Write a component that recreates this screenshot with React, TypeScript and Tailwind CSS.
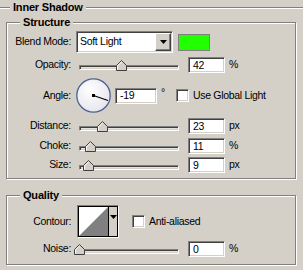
import React from 'react';

const face = 'bg-[#d4d0c8]';
const sunken =
  'border border-t-[#808080] border-l-[#808080] border-r-white border-b-white shadow-[inset_1px_1px_0_#404040,inset_-1px_-1px_0_#d4d0c8]';

function Thumb() {
  return (
    <svg width="11" height="11" viewBox="0 0 11 11">
      <path d="M0.5 10.5 V5.5 L5.5 0.5 L10.5 5.5 V10.5 Z" fill="#d4d0c8" stroke="#404040" />
      <path d="M1.5 9.5 V5.9 L5.5 1.9" fill="none" stroke="#ffffff" />
    </svg>
  );
}

function Slider({ value }: { value: number }) {
  return (
    <div className="relative w-[100px] h-[11px] flex items-end">
      <div className={`w-full h-[5px] mb-[1px] bg-[#e6e3dd] ${sunken}`} />
      <div className="absolute top-0" style={{ left: value - 5 }}>
        <Thumb />
      </div>
    </div>
  );
}

function Field({ value, w = 'w-[37px]' }: { value: string; w?: string }) {
  return (
    <div className={`${w} h-[16px] bg-white ${sunken} pl-[4px] flex items-center leading-none`}>
      {value}
    </div>
  );
}

function Check() {
  return <div className={`w-[13px] h-[13px] bg-white ${sunken}`} />;
}

function Label({ children }: { children: React.ReactNode }) {
  return <div className="w-[64px] text-right shrink-0">{children}</div>;
}

function SliderRow({
  label,
  value,
  unit,
  className = '',
}: {
  label: string;
  value: number;
  unit: string;
  className?: string;
}) {
  return (
    <div className={`flex items-center h-[16px] ${className}`}>
      <Label>{label}</Label>
      <div className="ml-[8px]">
        <Slider value={value} />
      </div>
      <div className="ml-[9px]">
        <Field value={String(value)} />
      </div>
      <div className="ml-[4px]">{unit}</div>
    </div>
  );
}

function Legend({ children }: { children: React.ReactNode }) {
  return (
    <div className={`-mt-[7px] ml-[13px] w-fit px-[3px] ${face} font-bold text-[11px] tracking-[-0.2px] leading-[13px]`}>
      {children}
    </div>
  );
}

function Dial() {
  return (
    <svg width="36" height="36" viewBox="0 0 36 36">
      <defs>
        <radialGradient id="dialFill" cx="0.4" cy="0.35" r="0.7">
          <stop offset="0" stopColor="#ffffff" />
          <stop offset="1" stopColor="#e4e4ec" />
        </radialGradient>
      </defs>
      <circle cx="17.5" cy="17.5" r="16.7" fill="url(#dialFill)" stroke="#4a6290" strokeWidth="1.3" />
      <line x1="17.5" y1="17.5" x2="32" y2="22.5" stroke="#000" strokeWidth="1.2" />
      <rect x="16" y="16" width="3" height="3" fill="#000" />
    </svg>
  );
}

export default function App() {
  return (
    <div
      className={`w-[303px] h-[270px] ${face} text-black text-[10.5px] tracking-[-0.3px] overflow-hidden font-['Tahoma','Liberation_Sans',sans-serif]`}
    >
      {/* Inner Shadow header */}
      <div className="flex items-start h-[15px]">
        <div className="w-[10px] mt-[7px] h-[2px] border-t border-t-[#808080] border-b border-b-white" />
        <div className="px-[3px] font-bold text-[11px] tracking-[-0.2px] leading-[13px] mt-[1px]">Inner Shadow</div>
        <div className="flex-1 mt-[7px] h-[2px] border-t border-t-[#808080] border-b border-b-white" />
      </div>

      {/* Structure */}
      <div className="ml-[6px] mt-[7px] w-[290px] h-[157px] border border-[#808080] shadow-[inset_1px_1px_0_#fff,1px_1px_0_#fff]">
        <Legend>Structure</Legend>

        <div className="flex items-center h-[22px] mt-[2px]">
          <Label>Blend Mode:</Label>
          <div className={`ml-[5px] w-[97px] h-[22px] bg-white ${sunken} flex items-center`}>
            <div className="flex-1 pl-[3px]">Soft Light</div>
            <div className="w-[16px] h-[18px] mr-[1px] bg-[#d4d0c8] border border-t-white border-l-white border-r-[#404040] border-b-[#404040] shadow-[inset_-1px_-1px_0_#808080] flex items-center justify-center">
              <svg width="7" height="4" viewBox="0 0 7 4">
                <path d="M0 0 H7 L3.5 4 Z" fill="#000" />
              </svg>
            </div>
          </div>
          <div className="ml-[5px] w-[32px] h-[17px] bg-[#22ff00] border border-[#808080]" />
        </div>

        <SliderRow label="Opacity:" value={42} unit="%" className="mt-[4px]" />

        <div className="flex items-center h-[35px] mt-[5px]">
          <Label>Angle:</Label>
          <div className="ml-[5px]">
            <Dial />
          </div>
          <div className="ml-[3px]">
            <Field value="-19" w="w-[42px]" />
          </div>
          <div className="ml-[4px] self-start mt-[9px] leading-none">°</div>
          <div className="ml-[11px]">
            <Check />
          </div>
          <div className="ml-[4px]">Use Global Light</div>
        </div>

        <SliderRow label="Distance:" value={23} unit="px" className="mt-[5px]" />
        <SliderRow label="Choke:" value={11} unit="%" className="mt-[4px]" />
        <SliderRow label="Size:" value={9} unit="px" className="mt-[3px]" />
      </div>

      {/* Quality */}
      <div className="ml-[6px] mt-[16px] w-[290px] h-[70px] border border-[#808080] shadow-[inset_1px_1px_0_#fff,1px_1px_0_#fff]">
        <Legend>Quality</Legend>

        <div className="flex items-center h-[33px] mt-[3px]">
          <Label>Contour:</Label>
          <div className="ml-[6px] w-[42px] h-[33px] border border-t-[#808080] border-l-[#808080] border-r-white border-b-white">
            <div className="w-full h-full border border-black flex bg-[#d4d0c8]">
              <svg width="29" height="29" viewBox="0 0 29 29" className="shrink-0 bg-white">
                <path d="M0 29 L29 0 V29 Z" fill="#808080" />
              </svg>
              <div className="w-px bg-black" />
              <div className="flex-1 flex justify-center pt-[8px]">
                <svg width="7" height="4" viewBox="0 0 7 4">
                  <path d="M0 0 H7 L3.5 4 Z" fill="#000" />
                </svg>
              </div>
            </div>
          </div>
          <div className="ml-[13px]">
            <Check />
          </div>
          <div className="ml-[4px]">Anti-aliased</div>
        </div>

        <SliderRow label="Noise:" value={0} unit="%" className="mt-[3px]" />
      </div>
    </div>
  );
}
